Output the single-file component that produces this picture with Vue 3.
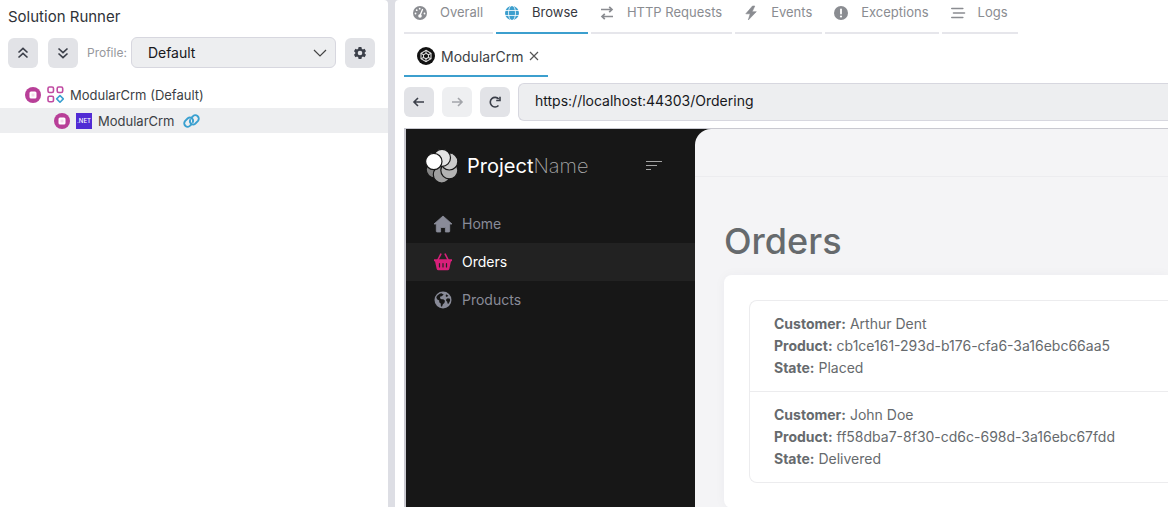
<script setup>
import { ref } from 'vue'

const address = ref('https://localhost:44303/Ordering')
const profile = ref('Default')
const tabs = [
  { id: 'overall', label: 'Overall' },
  { id: 'browse', label: 'Browse' },
  { id: 'http', label: 'HTTP Requests' },
  { id: 'events', label: 'Events' },
  { id: 'exceptions', label: 'Exceptions' },
  { id: 'logs', label: 'Logs' }
]
const activeTab = ref('browse')
const orders = [
  { customer: 'Arthur Dent', product: 'cb1ce161-293d-b176-cfa6-3a16ebc66aa5', state: 'Placed' },
  { customer: 'John Doe', product: 'ff58dba7-8f30-cd6c-698d-3a16ebc67fdd', state: 'Delivered' }
]
</script>

<template>
  <div class="shell">
    <aside class="runner">
      <h2 class="runner-title">Solution Runner</h2>
      <div class="toolbar">
        <button class="btn" type="button" aria-label="Start all">
          <svg viewBox="0 0 16 16" width="16" height="16" class="line"><path d="M3.500 7.500 8 3.300l4.500 4.200M3.500 12.500 8 8.300l4.500 4.200" /></svg>
        </button>
        <button class="btn second" type="button" aria-label="Stop all">
          <svg viewBox="0 0 16 16" width="16" height="16" class="line"><path d="M3.500 3.500 8 7.700l4.500-4.200M3.500 8.500 8 12.700l4.500-4.200" /></svg>
        </button>
        <label class="profile-label" for="profile">Profile:</label>
        <div class="select-wrap">
          <select id="profile" v-model="profile"><option>Default</option></select>
          <svg class="chevron" viewBox="0 0 14 8" width="14" height="8"><path d="M1 1l6 6 6-6" /></svg>
        </div>
        <button class="btn" type="button" aria-label="Settings">
          <svg viewBox="0 0 16 16" width="16" height="16">
            <path fill="#3b3f49" fill-rule="evenodd" d="M6.6 2h2.8l.4 1.8 1.1.6 1.7-.6L14 6.3l-1.3 1.2v1.1L14 9.8l-1.4 2.4-1.7-.6-1.1.7L9.400 14H6.600l-.4-1.700-1.100-.7-1.700.6L2 9.800l1.300-1.200V7.500L2 6.300l1.400-2.500 1.700.6 1.100-.6zM8 5.700a2.300 2.300 0 1 0 0 4.600 2.300 2.300 0 0 0 0-4.600z" />
          </svg>
        </button>
      </div>
      <ul class="tree">
        <li class="node">
          <svg viewBox="0 0 16 16" width="16" height="16"><circle cx="8" cy="8" r="8" fill="#b83f98" /><rect x="4.500" y="4.500" width="7" height="7" rx="1.500" fill="#fff" /><rect x="6.500" y="6.500" width="3" height="3" fill="#f3dcec" /></svg>
          <svg viewBox="0 0 17 17" width="17" height="17" fill="none" stroke-width="1.600"><g stroke="#c04aa2"><rect x="1" y="1" width="5.500" height="5.500" rx="1.500" /><rect x="10.200" y="1" width="5.500" height="5.500" rx="1.500" /><rect x="1" y="10.200" width="5.500" height="5.500" rx="1.500" /></g><path stroke="#3aa0d0" stroke-linejoin="round" d="M13 9.500l3.300 3.400-3.300 3.300-3.300-3.300z" /></svg>
          <span>ModularCrm (Default)</span>
        </li>
        <li class="node child">
          <svg viewBox="0 0 16 16" width="16" height="16"><circle cx="8" cy="8" r="8" fill="#b83f98" /><rect x="4.500" y="4.500" width="7" height="7" rx="1.500" fill="#fff" /><rect x="6.500" y="6.500" width="3" height="3" fill="#f3dcec" /></svg>
          <span class="net">.NET</span>
          <span>ModularCrm</span>
          <a href="#" class="link" aria-label="Open application">
            <svg viewBox="0 0 17 14" width="17" height="14" fill="none" stroke="#3aa0d0" stroke-width="1.900" stroke-linecap="round"><path d="M8.400 10.400 7.300 11.500A3.400 3.400 0 0 1 2 7.200L4.800 4.300A3.300 3.300 0 0 1 9.900 8" /><path d="M8.600 3.600 9.700 2.500A3.400 3.400 0 0 1 15 6.800L12.200 9.700A3.300 3.300 0 0 1 7.100 6" /></svg>
          </a>
        </li>
      </ul>
    </aside>

    <main class="workspace">
      <nav class="tabs">
        <button v-for="t in tabs" :key="t.id" type="button" class="tab" :class="{ active: t.id === activeTab }" @click="activeTab = t.id">
          <svg viewBox="0 0 16 16" width="16" height="16">
            <template v-if="t.id === 'overall'">
              <circle cx="8" cy="8" r="7" fill="currentColor" />
              <path d="M8 10.500 10.500 4.500" stroke="#fff" stroke-width="1.300" stroke-linecap="round" />
              <circle cx="8" cy="11" r="1.800" fill="#fff" />
              <g fill="#fff"><circle cx="3.500" cy="8.500" r=".9" /><circle cx="4.700" cy="5.200" r=".9" /><circle cx="7.700" cy="3.700" r=".9" /><circle cx="12.500" cy="8.500" r=".9" /></g>
            </template>
            <template v-else-if="t.id === 'browse'">
              <circle cx="8" cy="8" r="7" fill="#3c9fce" />
              <g fill="none" stroke="#fff" stroke-width=".8"><ellipse cx="8" cy="8" rx="3.500" ry="7.500" /><path d="M1 5.500h14M1 10.500h14" /></g>
            </template>
            <path v-else-if="t.id === 'http'" d="M2 4.500h11M10.200 1.800 13 4.500 10.200 7.200M14 11.500H3M5.800 8.800 3 11.500 5.800 14.200" fill="none" stroke="currentColor" stroke-width="1.700" />
            <path v-else-if="t.id === 'events'" d="M9.500 1 2.800 8.800h4.400L5.300 15 13.300 6.700H9.200L11.800 1z" fill="currentColor" stroke="currentColor" stroke-width=".6" stroke-linejoin="round" />
            <template v-else-if="t.id === 'exceptions'">
              <circle cx="8" cy="8" r="7" fill="currentColor" />
              <path d="M8 4.300v4.200" stroke="#fff" stroke-width="1.800" stroke-linecap="round" /><circle cx="8" cy="11.500" r="1.100" fill="#fff" />
            </template>
            <path v-else d="M1.800 3.500h11M3.500 8h11M1.800 12.500h11" stroke="currentColor" stroke-width="1.600" stroke-linecap="round" />
          </svg>
          <span>{{ t.label }}</span>
        </button>
      </nav>

      <div class="app-tab">
        <svg viewBox="0 0 18 18" width="18" height="18"><circle cx="9" cy="9" r="9" fill="#111" /><g fill="none" stroke="#ddd" stroke-width="1.100"><path d="M9 3.300 14 6.200v5.600L9 14.700 4 11.800V6.200z" /><path d="M9 6.300 11.500 7.700v2.700L9 11.800 6.500 10.400V7.700zM9 3.300v3M9 11.800v3M4 6.200l2.500 1.500M14 6.200l-2.500 1.500M4 11.800l2.500-1.400M14 11.800l-2.500-1.400" /></g></svg>
        <span>ModularCrm</span>
        <button type="button" class="close" aria-label="Close tab">
          <svg viewBox="0 0 10 10" width="10" height="10"><path d="M1 1l8 8M9 1L1 9" stroke="#555" stroke-width="1.200" /></svg>
        </button>
      </div>

      <div class="address-row">
        <button class="btn" type="button" aria-label="Back"><svg viewBox="0 0 16 16" width="16" height="16" class="line"><path d="M13 8H3M7 4 3 8l4 4" /></svg></button>
        <button class="btn" type="button" aria-label="Forward" disabled><svg viewBox="0 0 16 16" width="16" height="16" class="line"><path d="M3 8h10M9 4l4 4-4 4" /></svg></button>
        <button class="btn" type="button" aria-label="Reload"><svg viewBox="0 0 16 16" width="16" height="16" class="line"><path d="M11.500 11.500A4.800 4.800 0 1 1 11.700 5" /><path d="M13 2.700V6.500H9.200" /></svg></button>
        <input v-model="address" class="address" type="text" aria-label="Address" />
      </div>

      <div class="browser">
        <div class="sidebar">
          <div class="brand">
            <svg viewBox="0 0 34 34" width="34" height="34">
              <g stroke="#171717" stroke-width="1.200">
                <circle cx="9.500" cy="20.500" r="8.300" fill="#858585" />
                <circle cx="16.800" cy="25.500" r="8.500" fill="#a0a0a0" />
                <circle cx="24.300" cy="21.300" r="8.500" fill="#b3b3b3" />
                <circle cx="24.300" cy="12.500" r="8.500" fill="#cbcbcb" />
                <circle cx="17" cy="8.800" r="8.500" fill="#e4e4e4" />
                <circle cx="8.800" cy="12.500" r="8.200" fill="#fff" />
              </g>
            </svg>
            <span class="brand-name"><span>Project</span><span class="thin">Name</span></span>
            <button type="button" class="menu-btn" aria-label="Toggle menu"><svg viewBox="0 0 18 12" width="18" height="12"><path d="M1 1.500h16M1 5.500h11M1 9.500h5" stroke="#a4a4a4" stroke-width="1.200" /></svg></button>
          </div>
          <nav class="menu">
            <a href="#">
              <svg viewBox="0 0 20 18" width="20" height="18"><path fill="currentColor" stroke="currentColor" stroke-width=".8" stroke-linejoin="round" d="M10 1 19 9h-2.300v7.200a.8.8 0 0 1-.8.8h-3.500v-4.500H7.600V17H4.100a.8.8 0 0 1-.8-.8V9H1z" /></svg>
              <span>Home</span>
            </a>
            <a href="#" class="current">
              <svg viewBox="0 0 20 18" width="20" height="18"><path d="M7.800 1.200 4.800 7M12.200 1.200l3 5.800" stroke="#d91f7a" stroke-width="1.600" stroke-linecap="round" /><path fill="#d91f7a" d="M1 6.300h18v2h-1L16.300 16a1.800 1.800 0 0 1-1.700 1.300H5.400A1.800 1.800 0 0 1 3.700 16L2 8.300H1z" /><path d="M6.500 10.500v3.500M10 10.500v3.500M13.500 10.500v3.500" stroke="#222" stroke-width="1.200" stroke-linecap="round" /></svg>
              <span>Orders</span>
            </a>
            <a href="#">
              <svg viewBox="0 0 20 18" width="20" height="18"><circle cx="10" cy="9" r="8.500" fill="currentColor" /><path fill="#171717" d="M3.300 6.300C4.300 4.200 6 2.800 8.300 2.300L10.700 3.500 8.800 5.200 7.300 5.400 7 7.200 8.500 8.200H10.300L12 9.800 11.400 12 9.900 13.200 9 15.700 7.900 15.200 7.700 12.500 6.200 11.200V9.400L4 8.200zM13 3.300 15.400 4.800 13.800 6 12.700 5.300zM13.300 8.100 14.800 7.200 17 7.800 17.100 9.800 15.600 12.800 14.500 12.500 14.200 10.700 13.100 9.800z" /></svg>
              <span>Products</span>
            </a>
          </nav>
        </div>
        <section class="page">
          <div class="page-top"></div>
          <h1>Orders</h1>
          <div class="card">
            <ul class="orders">
              <li v-for="o in orders" :key="o.product">
                <div><strong>Customer:</strong> {{ o.customer }}</div>
                <div><strong>Product:</strong> {{ o.product }}</div>
                <div><strong>State:</strong> {{ o.state }}</div>
              </li>
            </ul>
          </div>
        </section>
      </div>
    </main>
  </div>
</template>

<style>
body { background: #fff; }
</style>

<style scoped>
* { box-sizing: border-box; }
button, input, select { font: inherit; color: inherit; }
button { border: 0; padding: 0; background: none; cursor: pointer; }
svg { display: block; flex: none; }
ul { list-style: none; margin: 0; padding: 0; }
a { text-decoration: none; }
.shell { display: flex; height: 100vh; overflow: hidden; background: #dddee4; font-family: Inter, "Open Sans", sans-serif; font-size: 13px; color: #3c3f45; }
.runner { flex: 0 0 388px; background: #fff; border-top-right-radius: 4px; }
.runner-title { margin: 0; padding: 6px 8px 0; font-size: 15px; line-height: 22px; font-weight: 400; color: #2f3238; }
.toolbar { display: flex; align-items: center; padding: 9px 13px 0 8px; height: 40px; }
.btn { display: flex; align-items: center; justify-content: center; flex: none; width: 30px; height: 30px; border-radius: 6px; background: #e2e3e7; }
.btn:disabled { background: #eeeff1; opacity: 1; }
.btn:disabled .line { stroke: #a3a5aa; }
.line { fill: none; stroke: #3b3f49; stroke-width: 1.600; }
.second { margin-left: 10px; }
.profile-label { color: #96989d; margin: 0 4px 0 9px; flex: none; font-size: 12px; }
.select-wrap { position: relative; flex: 1; margin-right: 9px; }
.select-wrap select { appearance: none; display: block; width: 100%; height: 31px; border: 1px solid #d7d7df; border-radius: 6px; background: #edeef0; padding: 0 30px 1px 16px; font-size: 14px; color: #17181c; }
.chevron { position: absolute; right: 9px; top: 12px; fill: none; stroke: #444; stroke-width: 1.200; pointer-events: none; }
.tree { padding-top: 13px; }
.node { display: flex; align-items: center; height: 27px; padding-left: 25px; gap: 6px; }
.child { height: 25px; padding-left: 54px; background: #edeef0; }
.net { width: 16px; height: 16px; background: #512bd4; color: #fff; font-size: 6px; line-height: 16px; text-align: center; font-weight: 500; }
.link { margin-left: 2px; }
.workspace { flex: 1; min-width: 0; margin-left: 7px; padding-left: 9px; background: #fff; border-top-left-radius: 4px; display: flex; flex-direction: column; }
.tabs { display: flex; gap: 3px; height: 34px; flex: none; }
.tab { display: flex; align-items: flex-start; gap: 12px; padding: 5px 10px 0 8px; color: #8a8c91; border-bottom: 2px solid #e6e6eb; white-space: nowrap; }
.tab span { line-height: 15px; }
.tab.active { color: #36383e; border-color: #3c9fce; }
.app-tab { display: flex; align-items: center; gap: 6px; align-self: flex-start; flex: none; height: 43px; padding: 3px 9px 0 13px; border-bottom: 2px solid #3c9fce; font-size: 14px; }
.address-row { display: flex; gap: 8px; align-items: center; padding-top: 6px; flex: none; }
.address { flex: 1; min-width: 0; height: 38px; border: 1px solid #d7d7df; border-right: 0; border-radius: 6px 0 0 6px; background: #edeef0; padding: 0 16px 3px; color: #17181c; font-size: 14px; }
.browser { flex: 1; min-height: 0; margin-top: 7px; display: flex; border-top: 1px solid #c9c9d0; border-left: 2px solid #c9c9d0; background: #171717; overflow: hidden; }
.sidebar { flex: 0 0 289px; }
.brand { display: flex; align-items: center; height: 76px; padding: 0 32px 2px 19px; }
.brand-name { margin-left: 8px; font-size: 20px; color: #fff; font-weight: 400; }
.thin { font-weight: 200; color: #a9a9a9; }
.menu-btn { margin-left: auto; }
.menu a { display: flex; align-items: center; height: 38px; padding: 0 0 1px 27px; gap: 9px; color: #898b98; font-size: 14px; }
.menu a.current { background: #222; color: #fff; }
.page { flex: 1; min-width: 0; background: #f4f4f6; border-top-left-radius: 16px; color: #666a6d; }
.page-top { height: 48px; border-bottom: 1px solid #ececef; }
h1 { margin: 42px 0 0 29px; font-size: 36px; line-height: 44px; font-weight: 500; color: #666a6d; }
.card { margin: 12px 0 0 29px; padding: 25px 0 25px 25px; background: #fff; border-radius: 8px 0 0 8px; box-shadow: 0 0 12px rgba(40, 60, 80, 0.04); }
.orders { border: 1px solid #ececee; border-right: 0; border-radius: 8px 0 0 8px; }
.orders li { padding: 12px 24px; line-height: 22px; font-size: 14px; }
.orders li + li { border-top: 1px solid #ececee; }
</style>
